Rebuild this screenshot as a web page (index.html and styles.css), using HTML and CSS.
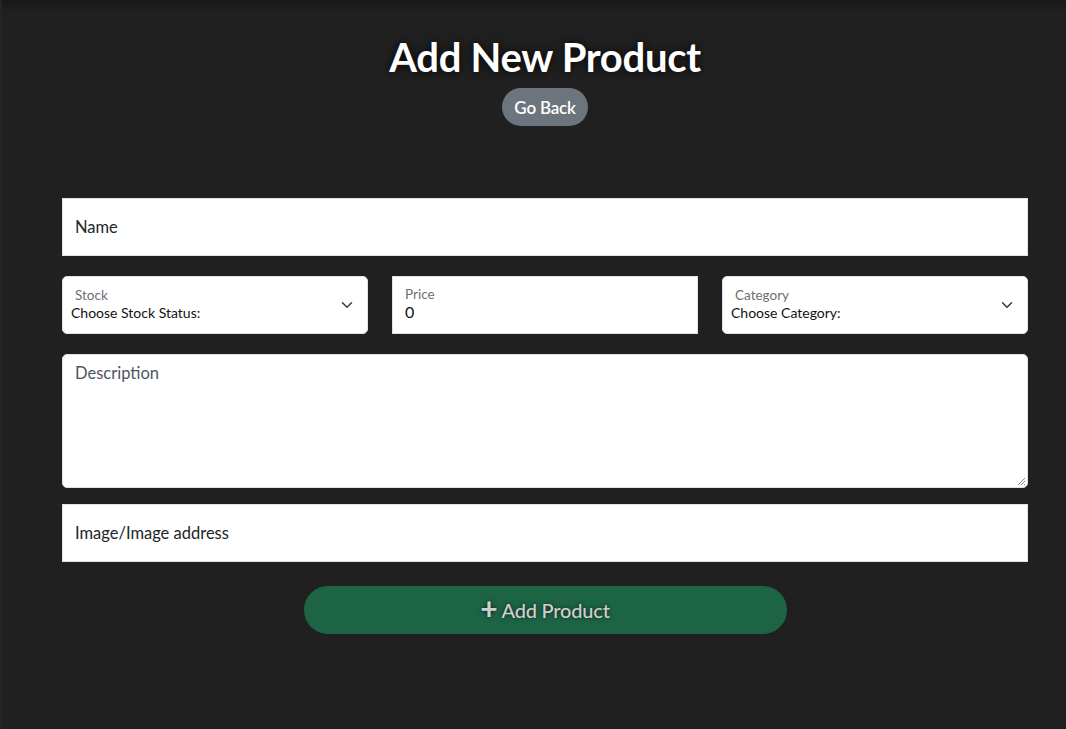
FILE: index.html
```html
<!DOCTYPE html>
<html lang="en">
<head>
<meta charset="utf-8">
<title>Add New Product</title>
<link rel="stylesheet" href="styles.css">
</head>
<body>
<main class="page">
  <header class="head">
    <h1 class="title">Add New Product</h1>
    <button class="btn-back" type="button">Go Back</button>
  </header>
  <form class="form">
    <div class="field field-plain">
      <span class="ph">Name</span>
    </div>
    <div class="row">
      <div class="field field-float rounded">
        <span class="flabel">Stock</span>
        <span class="fvalue sel">Choose Stock Status:</span>
        <svg class="chev" viewBox="0 0 16 16" width="14" height="14"><path d="M2 5l6 6 6-6" fill="none" stroke="#343a40" stroke-width="2" stroke-linecap="round" stroke-linejoin="round"/></svg>
      </div>
      <div class="field field-float">
        <span class="flabel">Price</span>
        <span class="fvalue num">0</span>
      </div>
      <div class="field field-float rounded">
        <span class="flabel">Category</span>
        <span class="fvalue sel">Choose Category:</span>
        <svg class="chev" viewBox="0 0 16 16" width="14" height="14"><path d="M2 5l6 6 6-6" fill="none" stroke="#343a40" stroke-width="2" stroke-linecap="round" stroke-linejoin="round"/></svg>
      </div>
    </div>
    <div class="field field-area rounded">
      <span class="ph muted">Description</span>
      <svg class="grip" viewBox="0 0 10 10" width="10" height="10"><path d="M9 2L2 9M9 5L5 9M9 8L8 9" stroke="#888" stroke-width="1"/></svg>
    </div>
    <div class="field field-plain img">
      <span class="ph">Image/Image address</span>
    </div>
    <div class="actions">
      <button class="btn-add" type="button"><span class="plus">+</span> Add Product</button>
    </div>
  </form>
</main>
</body>
</html>
```

FILE: styles.css
```css
* { box-sizing: border-box; }
html, body { margin: 0; padding: 0; }
body {
  background: #202020;
  background-image: linear-gradient(to bottom, #181818 0px, #202020 12px);
  font-family: "Lato", "Inter", "Noto Sans", sans-serif;
  color: #212529;
  min-height: 729px;
  box-shadow: inset 2px 0 0 #22262b;
}
.page {
  padding: 33px 38px 0 62px;
}
.head {
  display: flex;
  flex-direction: column;
  align-items: center;
}
.title {
  margin: 0 0 7px;
  font-size: 40px;
  line-height: 48px;
  font-weight: 700;
  color: #fff;
  text-shadow: 0 0 8px rgba(0,0,0,0.9);
  letter-spacing: -0.3px;
}
.btn-back {
  height: 38px;
  padding: 0 12px;
  border: none;
  border-radius: 19px;
  background: #6c757d;
  color: #fff;
  font-family: inherit;
  font-size: 17px;
  font-weight: 600;
  letter-spacing: -0.2px;
}
.form {
  margin-top: 72px;
  width: 966px;
  display: flex;
  flex-direction: column;
}
.field {
  background: #fff;
  border: 1px solid #dee2e6;
  position: relative;
}
.rounded { border-radius: 5px; }
.field-plain {
  height: 58px;
  display: flex;
  align-items: center;
  padding: 0 12px;
}
.ph {
  font-size: 16.5px;
  color: #212529;
}
.muted { color: #4d5661; }
.row {
  margin-top: 20px;
  display: grid;
  grid-template-columns: repeat(3, 1fr);
  gap: 24px;
}
.field-float {
  height: 58px;
  display: flex;
  flex-direction: column;
  justify-content: center;
  padding: 0 12px;
}
.flabel {
  font-size: 13.5px;
  color: #6c6f73;
  line-height: 16px;
  margin-top: -2px;
}
.fvalue {
  font-size: 14px;
  line-height: 19px;
  color: #111;
}
.fvalue.sel { margin-left: -4px; }
.fvalue.num { font-size: 16px; line-height: 20px; }
.chev {
  position: absolute;
  right: 14px;
  top: 22px;
  width: 12px;
  height: 12px;
}
.field-area {
  margin-top: 20px;
  height: 134px;
  padding: 8px 12px;
}
.grip {
  position: absolute;
  right: 1px;
  bottom: 1px;
}
.img { margin-top: 16px; }
.actions {
  margin-top: 24px;
  display: flex;
  justify-content: center;
}
.btn-add {
  width: 483px;
  height: 48px;
  border: none;
  border-radius: 24px;
  background: #1d6445;
  color: #cfcfcf;
  font-family: inherit;
  font-size: 20px;
  font-weight: 500;
  letter-spacing: -0.2px;
  text-shadow: 0 0 4px rgba(0,0,0,0.7);
  display: flex;
  align-items: center;
  justify-content: center;
  gap: 4px;
}
.plus {
  font-size: 30px;
  font-weight: 700;
  line-height: 1;
  margin-top: -4px;
}
```
